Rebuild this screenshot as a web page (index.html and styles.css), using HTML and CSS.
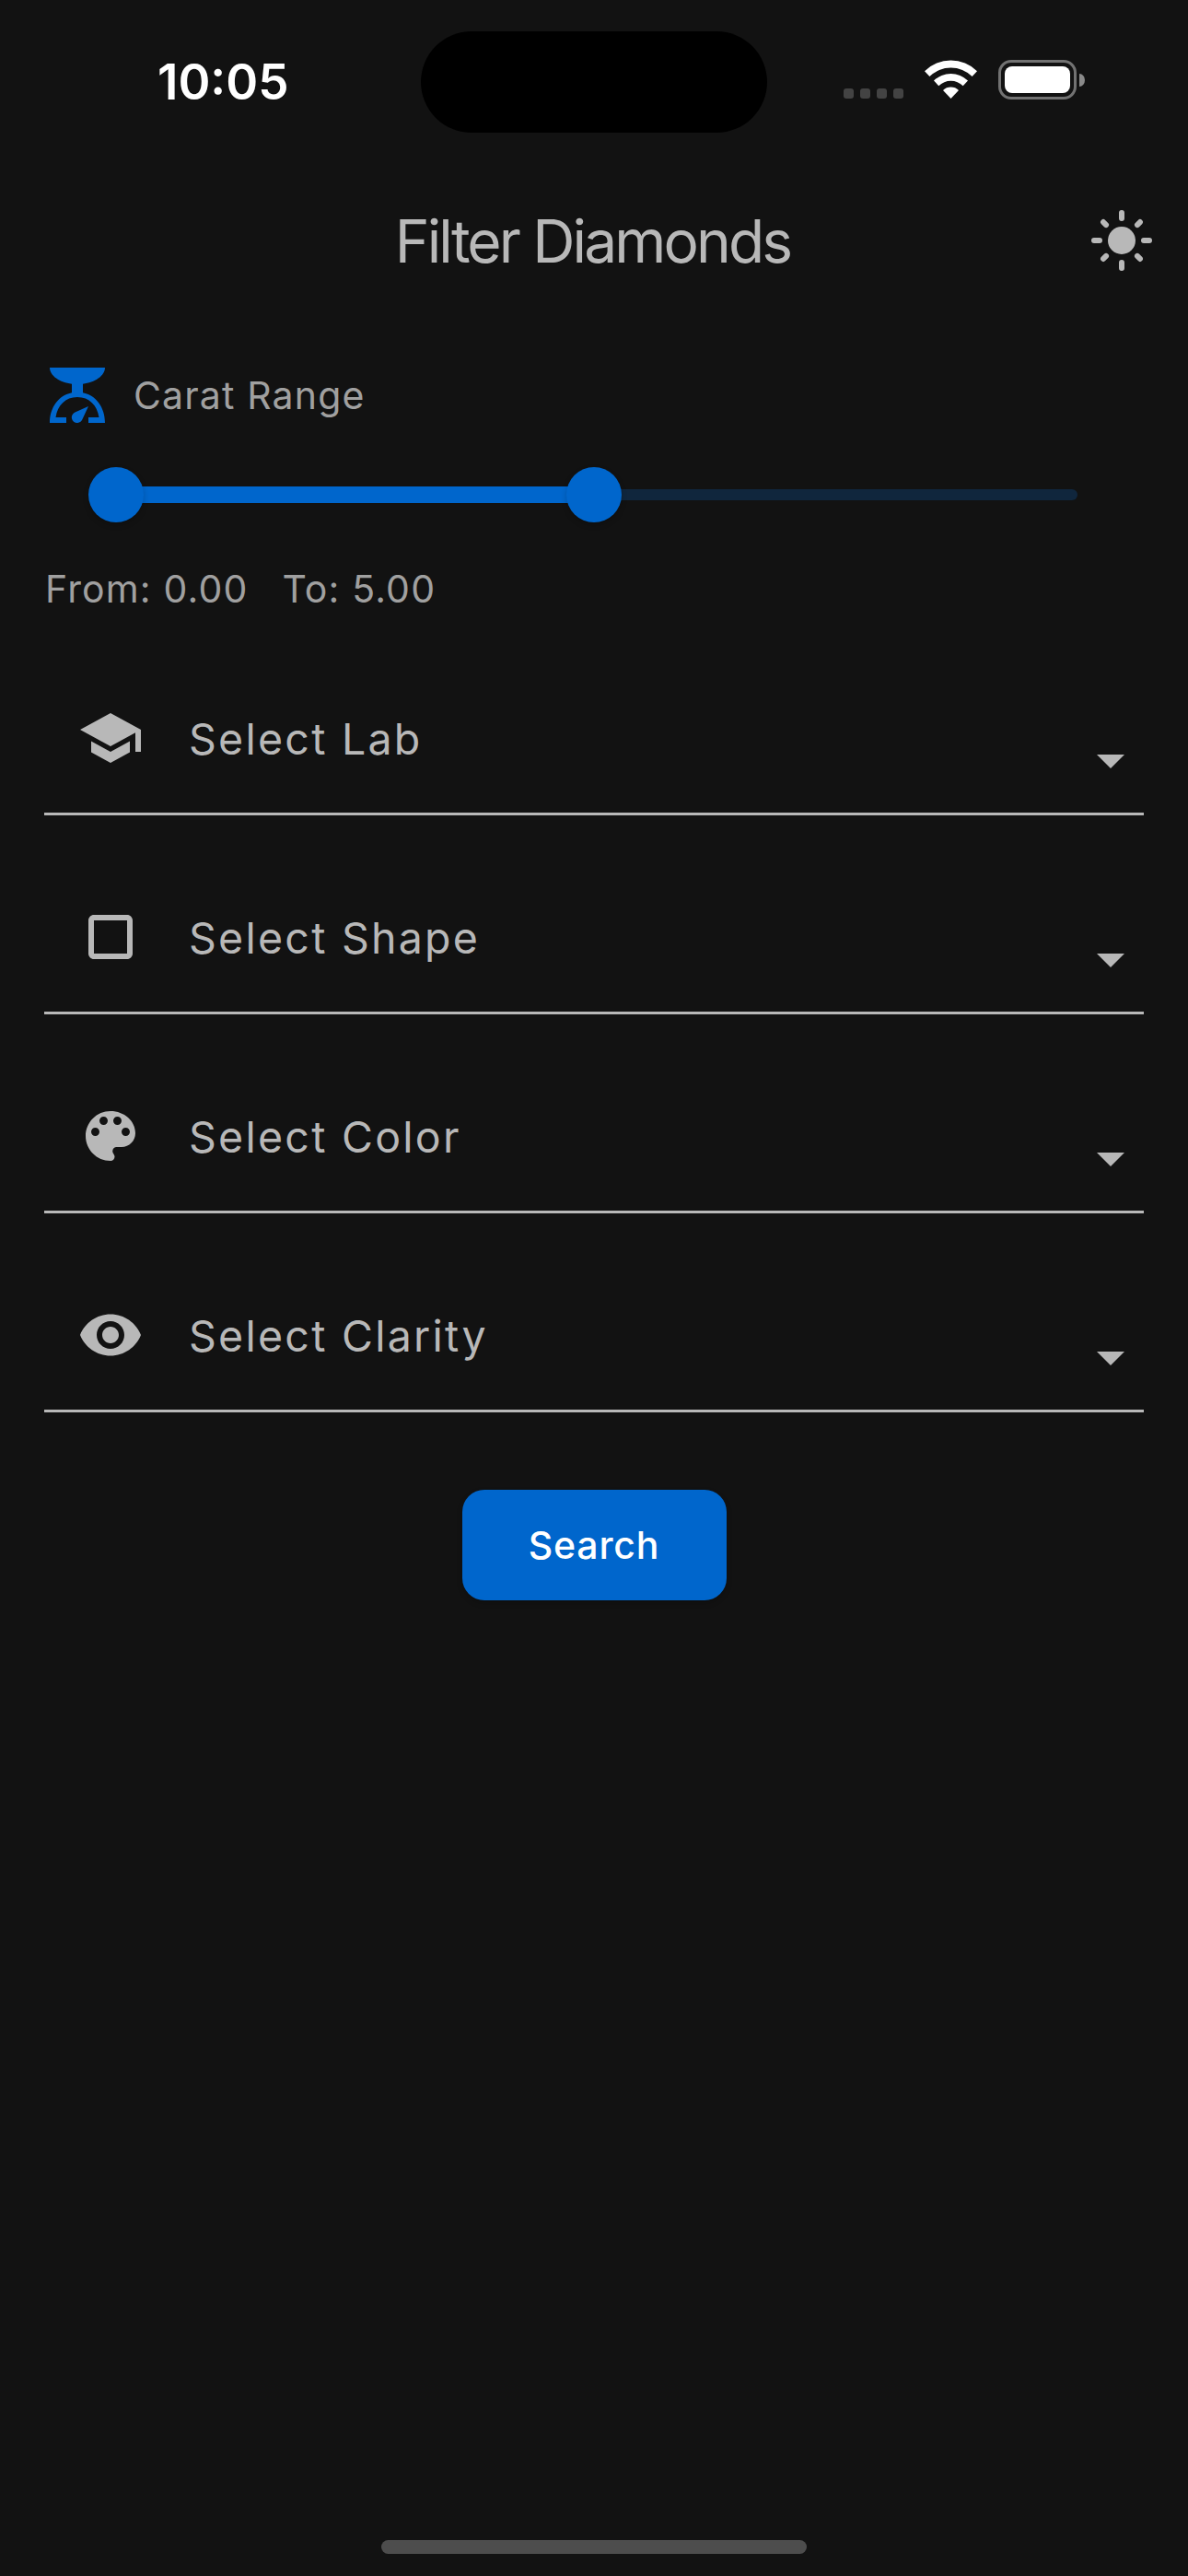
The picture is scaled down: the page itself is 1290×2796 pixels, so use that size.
FILE: index.html
```html
<!DOCTYPE html>
<html lang="en">
<head>
<meta charset="utf-8">
<title>Filter Diamonds</title>
<link rel="stylesheet" href="styles.css">
</head>
<body>
<div class="screen">
  <div class="status-bar">
    <div class="status-time"><span class="time">10:05</span></div>
    <div class="island"></div>
    <div class="status-icons">
      <div class="signal"><i></i><i></i><i></i><i></i></div>
      <svg class="wifi" viewBox="0 0 57 42">
        <path d="M0 12.2A40.6 40.6 0 0 1 57 12.2L51.6 18A33 33 0 0 0 5.4 18Z"/>
        <path d="M10 22.5A26.5 26.5 0 0 1 47 22.5L41.700 28.2A19 19 0 0 0 15.300 28.2Z"/>
        <path d="M20 32.900A12.200 12.200 0 0 1 37 32.900L28.500 42Z"/>
      </svg>
      <div class="battery"><div class="battery-body"><div class="battery-level"></div></div><div class="battery-cap"></div></div>
    </div>
  </div>

  <header class="header">
    <span class="header-side"></span>
    <h1 class="title">Filter Diamonds</h1>
    <span class="header-side">
      <svg class="icon" viewBox="0 0 24 24">
        <circle cx="12" cy="12" r="5"/>
        <path class="rays" d="M12 2v2M12 20v2M2 12h2M20 12h2M5.350 5.350l1 1M17.650 17.650l1 1M5.350 18.650l1-1M17.650 6.350l1-1"/>
      </svg>
    </span>
  </header>

  <main class="content">
    <div class="range-label">
      <svg class="scale" viewBox="0 0 60 60">
        <path d="M0 0H60C60 9 49 16 36 17.700V27.300C50 30 60 43 60 60H42V54H53.500C51.500 41 43 32 30 32S8.500 41 6.500 54H18V60H0C0 43 10 30 24 27.300V17.700C11 16 0 9 0 0Z"/>
        <path d="M42 42L28 48.300A6 6 0 1 0 35.500 56Z"/>
      </svg>
      <span class="body-text">Carat Range</span>
    </div>

    <div class="slider">
      <div class="track"></div>
      <div class="track-active"></div>
      <div class="thumb thumb-start"></div>
      <div class="thumb thumb-end"></div>
    </div>

    <div class="range-values body-text"><span class="from">From: 0.00</span><span>To: 5.00</span></div>

    <div class="field">
      <svg class="icon" viewBox="0 0 24 24"><path d="M5 13.180v4L12 21l7-3.820v-4L12 17l-7-3.820zM12 3L1 9l11 6 9-4.910V17h2V9L12 3z"/></svg>
      <span class="field-text">Select Lab</span>
      <svg class="icon arrow" viewBox="0 0 24 24"><path d="M7 10l5 5 5-5z"/></svg>
    </div>
    <div class="field">
      <svg class="icon" viewBox="0 0 24 24"><path d="M18 4H6c-1.100 0-2 .9-2 2v12c0 1.100.9 2 2 2h12c1.100 0 2-.9 2-2V6c0-1.100-.9-2-2-2zm0 14H6V6h12v12z"/></svg>
      <span class="field-text">Select Shape</span>
      <svg class="icon arrow" viewBox="0 0 24 24"><path d="M7 10l5 5 5-5z"/></svg>
    </div>
    <div class="field">
      <svg class="icon" viewBox="0 0 24 24"><path d="M12 3c-4.970 0-9 4.030-9 9s4.030 9 9 9c.83 0 1.500-.67 1.500-1.500 0-.39-.15-.74-.39-1.010-.23-.26-.38-.61-.38-.99 0-.83.67-1.500 1.500-1.500H16c2.760 0 5-2.240 5-5 0-4.420-4.030-8-9-8zm-5.500 9c-.83 0-1.500-.67-1.500-1.500S5.670 9 6.500 9 8 9.670 8 10.500 7.330 12 6.500 12zm3-4C8.670 8 8 7.330 8 6.500S8.670 5 9.500 5s1.500.67 1.500 1.500S10.330 8 9.500 8zm5 0c-.83 0-1.500-.67-1.500-1.500S13.670 5 14.500 5s1.500.67 1.500 1.500S15.330 8 14.500 8zm3 4c-.83 0-1.500-.67-1.500-1.500S16.670 9 17.500 9s1.500.67 1.500 1.500-.67 1.500-1.500 1.500z"/></svg>
      <span class="field-text">Select Color</span>
      <svg class="icon arrow" viewBox="0 0 24 24"><path d="M7 10l5 5 5-5z"/></svg>
    </div>
    <div class="field">
      <svg class="icon" viewBox="0 0 24 24"><path d="M12 4.500C7 4.500 2.730 7.610 1 12c1.730 4.390 6 7.500 11 7.500s9.270-3.110 11-7.500c-1.730-4.390-6-7.500-11-7.500zM12 17c-2.760 0-5-2.240-5-5s2.240-5 5-5 5 2.240 5 5-2.240 5-5 5zm0-8c-1.660 0-3 1.340-3 3s1.340 3 3 3 3-1.340 3-3-1.340-3-3-3z"/></svg>
      <span class="field-text">Select Clarity</span>
      <svg class="icon arrow" viewBox="0 0 24 24"><path d="M7 10l5 5 5-5z"/></svg>
    </div>

    <button class="search" type="button">Search</button>
  </main>

  <div class="home-indicator"></div>
</div>
</body>
</html>
```
FILE: styles.css
```css
* { box-sizing: border-box; }

body {
  margin: 0;
  background: #121212;
  color: #b8b8b8;
  font-family: Inter, "Liberation Sans", sans-serif;
}

.screen {
  width: 1290px;
  height: 2796px;
  display: flex;
  flex-direction: column;
  overflow: hidden;
}

.status-bar {
  height: 177px;
  display: grid;
  grid-template-columns: 457px 376px 457px;
  align-items: center;
}
.status-time { padding-left: 171px; }
.time {
  display: block;
  color: #fff;
  font-size: 53px;
  line-height: 60px;
  font-weight: 600;
}
.island { height: 110px; border-radius: 55px; background: #000; }

.status-icons {
  height: 43px;
  margin-bottom: 4px;
  padding-left: 83px;
  display: flex;
}
.signal { display: flex; gap: 7px; margin-top: 31px; }
.signal i { width: 11px; height: 11px; border-radius: 3px; background: #434343; }
.wifi { width: 57px; height: 42px; margin-left: 23px; fill: #fff; }
.battery { display: flex; gap: 3px; align-items: center; margin-left: 23px; }
.battery-body {
  width: 85px;
  height: 43px;
  padding: 4px;
  border: 3px solid #727272;
  border-radius: 14px;
}
.battery-level { height: 29px; border-radius: 8px; background: #fff; }
.battery-cap { width: 6px; height: 14px; border-radius: 0 6px 6px 0 / 0 7px 7px 0; background: #8a8a8a; }

.header {
  height: 168px;
  padding: 0 36px;
  display: flex;
  justify-content: space-between;
  align-items: center;
}
.header-side { width: 72px; height: 72px; }
.title {
  margin: 2px 3px 0 0;
  font-size: 64px;
  line-height: 80px;
  font-weight: 400;
  letter-spacing: -2.850px;
  white-space: nowrap;
}

.icon { display: block; width: 72px; height: 72px; flex: none; fill: #b8b8b8; }
.rays { fill: none; stroke: #b8b8b8; stroke-width: 2; stroke-linecap: round; }

.content {
  flex: 1;
  padding: 48px 48px 0;
  display: flex;
  flex-direction: column;
}
.body-text {
  color: #a0a0a0;
  font-size: 41px;
  line-height: 60px;
  letter-spacing: 1.150px;
  white-space: nowrap;
}

.range-label { height: 72px; padding-left: 6px; display: flex; align-items: center; gap: 31px; }
.scale { width: 60px; height: 60px; fill: #0066cc; }

.slider {
  height: 144px;
  margin: 0 24px;
  display: grid;
  grid-template-columns: 54px 519px 525px 48px;
  align-items: center;
}
.slider > div { grid-row: 1; }
.track { grid-column: 2 / 4; height: 12px; border-radius: 6px; background: #10263d; }
.track-active { grid-column: 2; height: 18px; background: #0066cc; }
.thumb {
  width: 60px;
  height: 60px;
  border-radius: 50%;
  background: #0066cc;
  box-shadow: 0 3px 6px rgba(0, 0, 0, 0.2);
}
.thumb-start { grid-column: 2; margin-left: -30px; }
.thumb-end { grid-column: 3; margin-left: -30px; }

.range-values { display: flex; gap: 37px; padding-left: 1px; }

.field {
  height: 216px;
  padding: 51px 0 0 36px;
  border-bottom: 3px solid #b8b8b8;
  display: flex;
  align-items: center;
}
.field-text {
  flex: 1;
  padding: 2px 0 0 49px;
  font-size: 46.500px;
  line-height: 72px;
  letter-spacing: 2.250px;
}
.arrow { margin-top: 48px; }

.search {
  align-self: center;
  width: 287px;
  height: 120px;
  margin-top: 84px;
  border: 0;
  border-radius: 24px;
  background: #0066cc;
  box-shadow: 0 3px 6px rgba(0, 0, 0, 0.2);
  color: #fff;
  font: 500 41px/60px Inter, "Liberation Sans", sans-serif;
  letter-spacing: 0.800px;
}

.home-indicator {
  align-self: center;
  width: 462px;
  height: 15px;
  margin-bottom: 24px;
  border-radius: 8px;
  background: #4d4d4d;
}
```
